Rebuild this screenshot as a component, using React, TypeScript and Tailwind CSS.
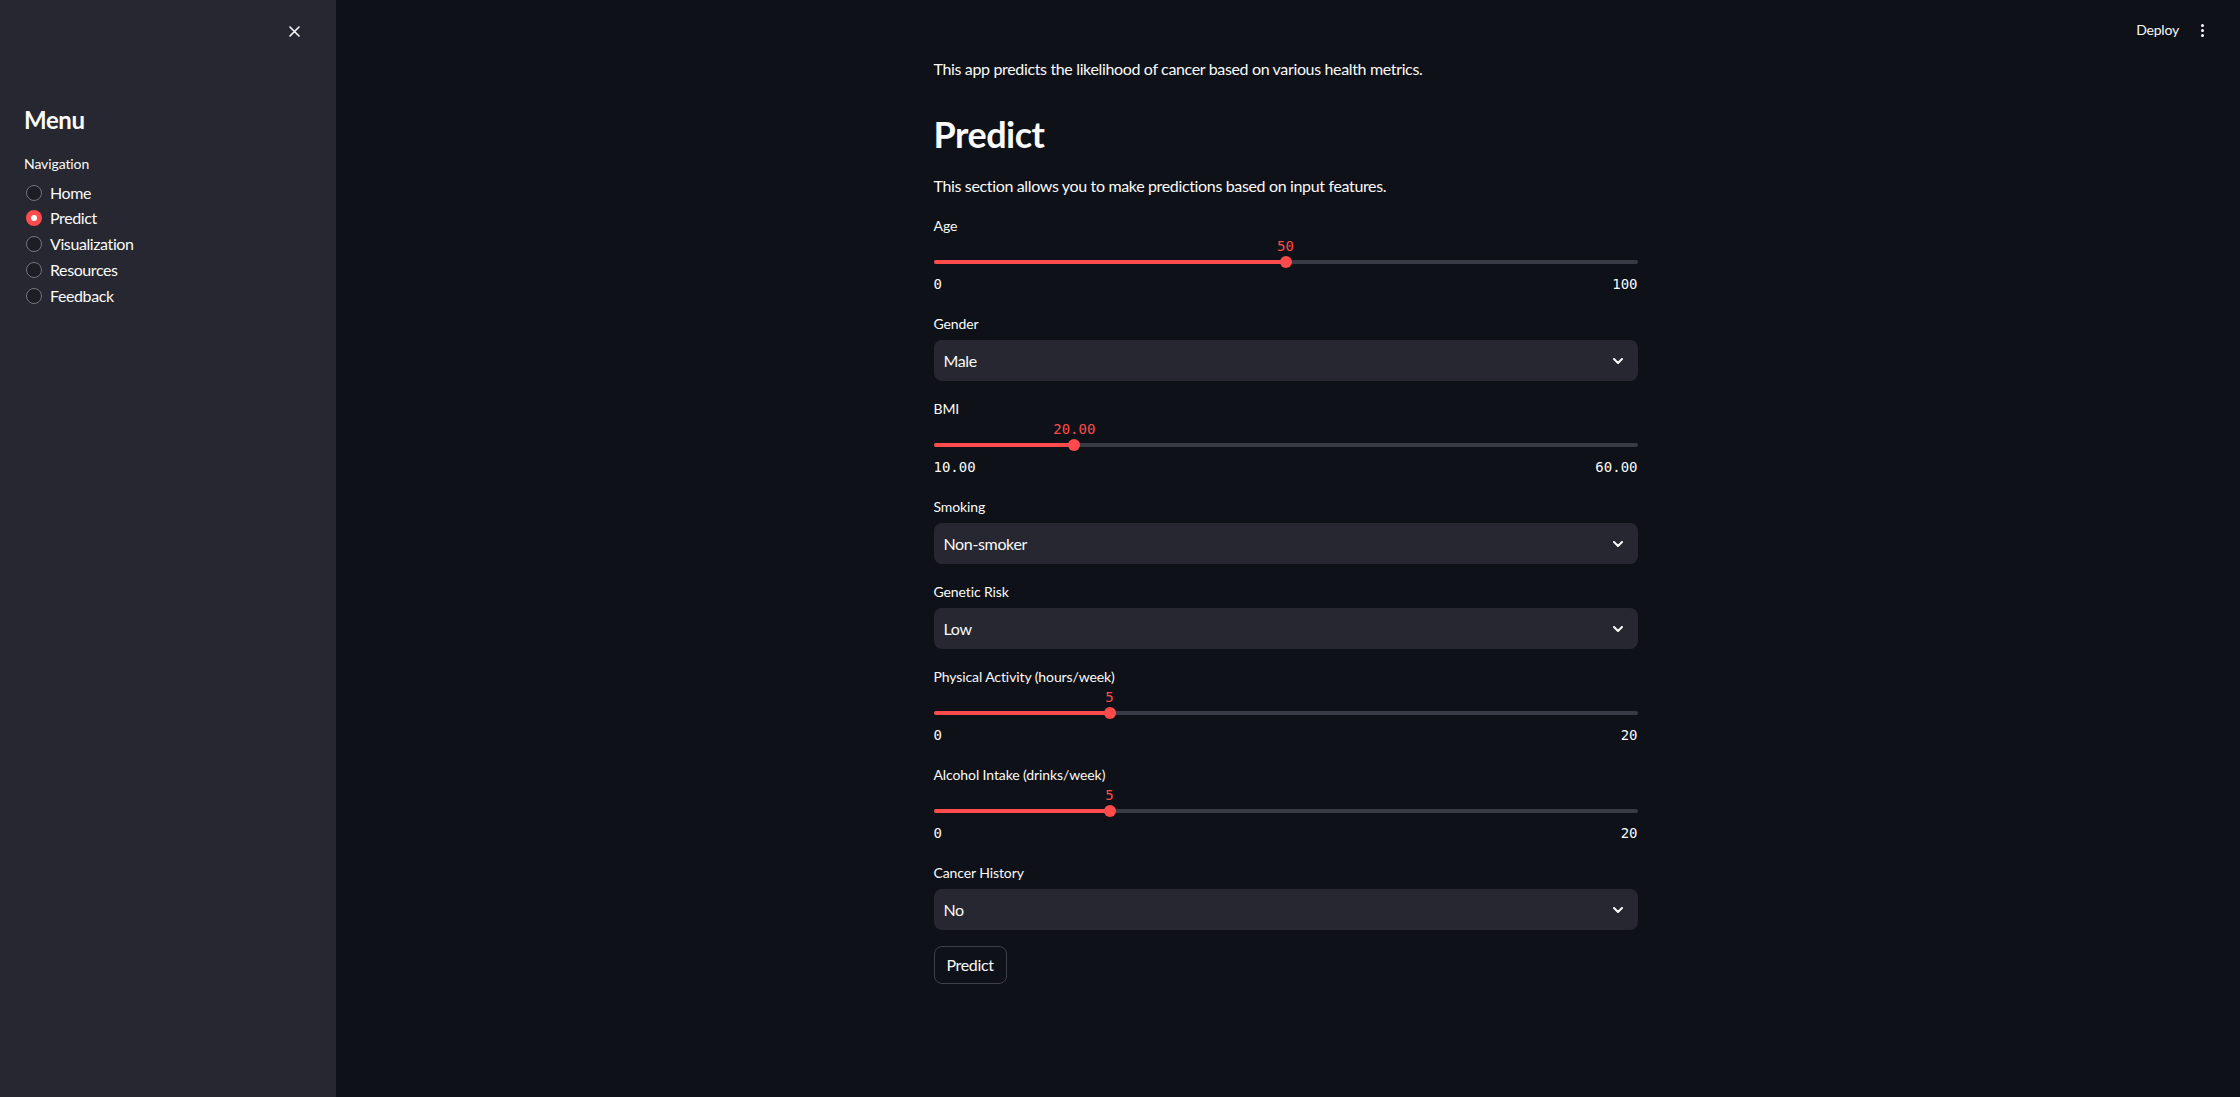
import React from "react";

const navItems = ["Home", "Predict", "Visualization", "Resources", "Feedback"];

const Chevron = () => (
  <svg width="10" height="6" viewBox="0 0 10 6" fill="none">
    <path d="M1 1L5 5L9 1" stroke="#fafafa" strokeWidth="2" strokeLinecap="round" strokeLinejoin="round" />
  </svg>
);

const FieldLabel = ({ text }: { text: string }) => (
  <div className="flex h-6 items-center text-sm tracking-[-0.1px] text-[#fafafa]">{text}</div>
);

interface SliderProps {
  label: string;
  min: number;
  max: number;
  value: number;
  fmt?: (n: number) => string;
}

const Slider = ({ label, min, max, value, fmt = (n) => String(n) }: SliderProps) => {
  const pct = ((value - min) / (max - min)) * 100;
  return (
    <div className="flex flex-col">
      <FieldLabel text={label} />
      <div className="relative h-4">
        <span
          className="absolute top-0 -translate-x-1/2 font-['DejaVu_Sans_Mono',monospace] text-sm leading-4 text-[#ff4b4b]"
          style={{ left: `${pct}%` }}
        >
          {fmt(value)}
        </span>
      </div>
      <div className="relative flex h-4 items-center">
        <div className="relative h-1 w-full rounded-full bg-[#383a44]">
          <div className="absolute left-0 top-0 h-1 rounded-full bg-[#ff4b4b]" style={{ width: `${pct}%` }} />
          <div
            className="absolute top-1/2 h-3 w-3 -translate-x-1/2 -translate-y-1/2 rounded-full bg-[#ff4b4b]"
            style={{ left: `${pct}%` }}
          />
        </div>
      </div>
      <div className="flex h-[26px] justify-between pt-1 font-['DejaVu_Sans_Mono',monospace] text-sm leading-5 text-[#fafafa]">
        <span>{fmt(min)}</span>
        <span>{fmt(max)}</span>
      </div>
    </div>
  );
};

const Select = ({ label, value }: { label: string; value: string }) => (
  <div className="flex flex-col">
    <FieldLabel text={label} />
    <div className="mt-1 flex h-[41px] items-center justify-between rounded-lg bg-[#262730] pl-[10px] pr-[15px] text-base tracking-[-0.35px] text-[#fafafa]">
      <span>{value}</span>
      <Chevron />
    </div>
  </div>
);

export default function App() {
  const active = "Predict";
  return (
    <div className="flex h-[1097px] w-full bg-[#0e1117] font-['Lato','Noto_Sans',sans-serif] text-[#fafafa]">
      <aside className="flex w-[336px] shrink-0 flex-col bg-[#262730]">
        <div className="flex justify-end pr-[26px] pt-[15px]">
          <button className="flex h-8 w-8 items-center justify-center">
            <svg width="11" height="11" viewBox="0 0 11 11" fill="none">
              <path d="M1 1L10 10M10 1L1 10" stroke="#fafafa" strokeWidth="1.6" strokeLinecap="round" />
            </svg>
          </button>
        </div>
        <div className="flex flex-col px-6">
          <h2 className="mt-[59px] text-2xl font-bold leading-[1.2] tracking-[-0.4px]">Menu</h2>
          <div className="mt-[19px] text-sm leading-5 tracking-[-0.1px]">Navigation</div>
          <div className="mt-[6px] flex flex-col">
            {navItems.map((item) => (
              <div key={item} className="flex h-[25.75px] items-center gap-2 text-base tracking-[-0.4px]">
                {item === active ? (
                  <span className="ml-[2px] flex h-4 w-4 items-center justify-center rounded-full bg-[#ff4b4b]">
                    <span className="h-[6px] w-[6px] rounded-full bg-white" />
                  </span>
                ) : (
                  <span className="ml-[2px] h-4 w-4 rounded-full border border-[#74757d] bg-[#1c1d25]" />
                )}
                <span>{item}</span>
              </div>
            ))}
          </div>
        </div>
      </aside>

      <main className="relative flex-1 pr-[5px]">
        <div className="absolute right-0 top-0 flex h-[60px] items-center gap-[22px] pr-[36px]">
          <span className="text-sm tracking-[-0.2px]">Deploy</span>
          <div className="flex flex-col gap-[2px]">
            <span className="h-[3px] w-[3px] rounded-full bg-[#fafafa]" />
            <span className="h-[3px] w-[3px] rounded-full bg-[#fafafa]" />
            <span className="h-[3px] w-[3px] rounded-full bg-[#fafafa]" />
          </div>
        </div>

        <div className="mx-auto flex w-[704px] flex-col pt-[56px]">
          <p className="text-base leading-[25.6px] tracking-[-0.35px]">
            This app predicts the likelihood of cancer based on various health metrics.
          </p>
          <h2 className="mt-[31px] text-[36px] font-bold leading-[1.2] tracking-[-0.5px]">Predict</h2>
          <p className="mt-[17px] text-base leading-[25.6px] tracking-[-0.35px]">
            This section allows you to make predictions based on input features.
          </p>

          <div className="mt-4 flex flex-col gap-4">
            <Slider label="Age" min={0} max={100} value={50} />
            <Select label="Gender" value="Male" />
            <Slider label="BMI" min={10} max={60} value={20} fmt={(n) => n.toFixed(2)} />
            <Select label="Smoking" value="Non-smoker" />
            <Select label="Genetic Risk" value="Low" />
            <Slider label="Physical Activity (hours/week)" min={0} max={20} value={5} />
            <Slider label="Alcohol Intake (drinks/week)" min={0} max={20} value={5} />
            <Select label="Cancer History" value="No" />
            <div>
              <button className="h-[38px] rounded-lg border border-[#3f4047] px-3 text-base tracking-[-0.35px] text-[#fafafa]">
                Predict
              </button>
            </div>
          </div>
        </div>
      </main>
    </div>
  );
}
